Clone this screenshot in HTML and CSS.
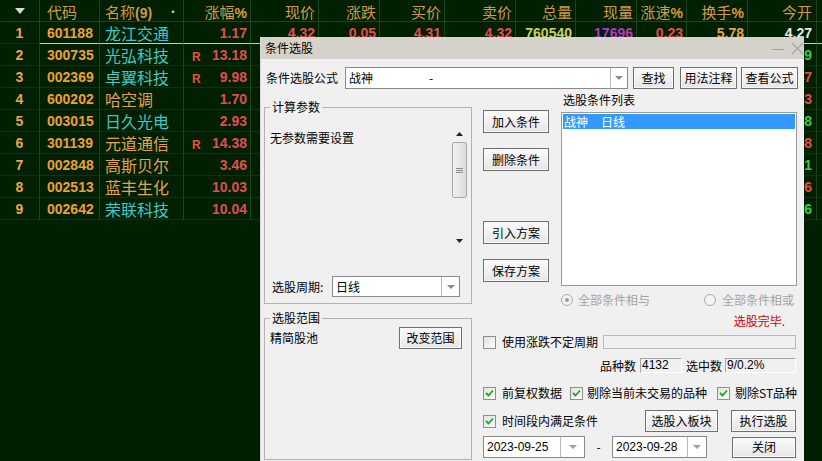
FILE: index.html
```html
<!DOCTYPE html>
<html lang="zh-CN">
<head>
<meta charset="utf-8">
<title>条件选股</title>
<link rel="stylesheet" href="styles.css">
</head>
<body>
<div class="screen">
  <div class="quote">
    <div class="qrow qhead">
      <div class="c c0"><svg width="10" height="6" viewBox="0 0 10 6"><path d="M0 0H10L5 6Z" fill="#d8d8d8"/></svg></div>
      <div class="c c1">代码</div>
      <div class="c c2 name-h"><span>名称<b>(9)</b></span><span class="dot">•</span></div>
      <div class="c">涨幅<b>%</b></div>
      <div class="c">现价</div>
      <div class="c">涨跌</div>
      <div class="c">买价</div>
      <div class="c">卖价</div>
      <div class="c">总量</div>
      <div class="c">现量</div>
      <div class="c">涨速<b>%</b></div>
      <div class="c">换手<b>%</b></div>
      <div class="c last">今开</div>
      <div class="c"></div>
    </div>

    <div class="qrow sel">
      <div class="c c0">1</div><div class="c c1">601188</div><div class="c c2 cyan">龙江交通</div>
      <div class="c c3"><span class="rr"></span><span class="red">1.17</span></div>
      <div class="c red">4.32</div><div class="c red">0.05</div><div class="c red">4.31</div><div class="c red">4.32</div>
      <div class="c ygreen">760540</div><div class="c purple">17696</div><div class="c red">0.23</div><div class="c gold">5.78</div>
      <div class="c last white">4.27</div><div class="c"></div>
    </div>
    <div class="qrow">
      <div class="c c0">2</div><div class="c c1">300735</div><div class="c c2 cyan">光弘科技</div>
      <div class="c c3"><span class="rr">R</span><span class="red">13.18</span></div>
      <div class="c"></div><div class="c"></div><div class="c"></div><div class="c"></div>
      <div class="c"></div><div class="c"></div><div class="c"></div><div class="c"></div>
      <div class="c last green">23.99</div><div class="c"></div>
    </div>
    <div class="qrow">
      <div class="c c0">3</div><div class="c c1">002369</div><div class="c c2 cyan">卓翼科技</div>
      <div class="c c3"><span class="rr">R</span><span class="red">9.98</span></div>
      <div class="c"></div><div class="c"></div><div class="c"></div><div class="c"></div>
      <div class="c"></div><div class="c"></div><div class="c"></div><div class="c"></div>
      <div class="c last red">7.47</div><div class="c"></div>
    </div>
    <div class="qrow">
      <div class="c c0">4</div><div class="c c1">600202</div><div class="c c2 gold">哈空调</div>
      <div class="c c3"><span class="rr"></span><span class="red">1.70</span></div>
      <div class="c"></div><div class="c"></div><div class="c"></div><div class="c"></div>
      <div class="c"></div><div class="c"></div><div class="c"></div><div class="c"></div>
      <div class="c last red">6.53</div><div class="c"></div>
    </div>
    <div class="qrow">
      <div class="c c0">5</div><div class="c c1">003015</div><div class="c c2 cyan">日久光电</div>
      <div class="c c3"><span class="rr"></span><span class="red">2.93</span></div>
      <div class="c"></div><div class="c"></div><div class="c"></div><div class="c"></div>
      <div class="c"></div><div class="c"></div><div class="c"></div><div class="c"></div>
      <div class="c last green">14.98</div><div class="c"></div>
    </div>
    <div class="qrow">
      <div class="c c0">6</div><div class="c c1">301139</div><div class="c c2 gold">元道通信</div>
      <div class="c c3"><span class="rr">R</span><span class="red">14.38</span></div>
      <div class="c"></div><div class="c"></div><div class="c"></div><div class="c"></div>
      <div class="c"></div><div class="c"></div><div class="c"></div><div class="c"></div>
      <div class="c last red">27.58</div><div class="c"></div>
    </div>
    <div class="qrow">
      <div class="c c0">7</div><div class="c c1">002848</div><div class="c c2 gold">高斯贝尔</div>
      <div class="c c3"><span class="rr"></span><span class="red">3.46</span></div>
      <div class="c"></div><div class="c"></div><div class="c"></div><div class="c"></div>
      <div class="c"></div><div class="c"></div><div class="c"></div><div class="c"></div>
      <div class="c last green">11.21</div><div class="c"></div>
    </div>
    <div class="qrow">
      <div class="c c0">8</div><div class="c c1">002513</div><div class="c c2 gold">蓝丰生化</div>
      <div class="c c3"><span class="rr"></span><span class="red">10.03</span></div>
      <div class="c"></div><div class="c"></div><div class="c"></div><div class="c"></div>
      <div class="c"></div><div class="c"></div><div class="c"></div><div class="c"></div>
      <div class="c last red">6.06</div><div class="c"></div>
    </div>
    <div class="qrow">
      <div class="c c0">9</div><div class="c c1">002642</div><div class="c c2 cyan">荣联科技</div>
      <div class="c c3"><span class="rr"></span><span class="red">10.04</span></div>
      <div class="c"></div><div class="c"></div><div class="c"></div><div class="c"></div>
      <div class="c"></div><div class="c"></div><div class="c"></div><div class="c"></div>
      <div class="c last green">5.16</div><div class="c"></div>
    </div>
  </div>

  <div class="dialog">
    <div class="titlebar">
      <span class="ttl">条件选股</span>
      <span class="tb-btns">
        <svg class="tb-min" width="12" height="12" viewBox="0 0 12 12"><path d="M0 6.5H12" stroke="#a4a4a4" stroke-width="1"/></svg>
        <svg class="tb-close" width="13" height="13" viewBox="0 0 13 13"><path d="M1 1L12 12M12 1L1 12" stroke="#a4a4a4" stroke-width="1.2"/></svg>
      </span>
    </div>
    <div class="dbody">
      <div class="formula-row">
        <span class="lbl-formula">条件选股公式</span>
        <div class="combo combo-formula">
          <span class="cv">战神<span class="dash">-</span></span>
          <span class="dd"><svg width="8" height="4" viewBox="0 0 8 4"><path d="M0 0H8L4 4Z" fill="#8a8a8a"/></svg></span>
        </div>
        <button class="btn b-find">查找</button>
        <button class="btn b-usage">用法注释</button>
        <button class="btn b-view">查看公式</button>
      </div>

      <div class="main">
        <div class="leftcol">
          <fieldset class="grp grp-params">
            <legend>计算参数</legend>
            <div class="params">
              <div class="ptext">无参数需要设置</div>
              <div class="vscroll">
                <div class="sb-arrow"><svg width="7" height="4" viewBox="0 0 7 4"><path d="M0 4H7L3.5 0Z" fill="#222"/></svg></div>
                <div class="sb-thumb"><svg width="7" height="5" viewBox="0 0 7 5"><path d="M0 0.5H7M0 2.5H7M0 4.5H7" stroke="#8a8a8a" stroke-width="1"/></svg></div>
                <div class="sb-track"></div>
                <div class="sb-arrow"><svg width="7" height="4" viewBox="0 0 7 4"><path d="M0 0H7L3.5 4Z" fill="#222"/></svg></div>
              </div>
            </div>
            <div class="period">
              <span class="plabel">选股周期:</span>
              <div class="combo combo-period">
                <span class="cv">日线</span>
                <span class="dd"><svg width="8" height="4" viewBox="0 0 8 4"><path d="M0 0H8L4 4Z" fill="#8a8a8a"/></svg></span>
              </div>
            </div>
          </fieldset>
          <fieldset class="grp grp-range">
            <legend>选股范围</legend>
            <div class="range-row">
              <span>精简股池</span>
              <button class="btn b-range">改变范围</button>
            </div>
          </fieldset>
        </div>

        <div class="rightcol">
          <div class="topsec">
            <div class="btncol">
              <button class="btn b-col">加入条件</button>
              <button class="btn b-col b-del">删除条件</button>
              <button class="btn b-col b-imp">引入方案</button>
              <button class="btn b-col b-save">保存方案</button>
            </div>
            <div class="listcol">
              <div class="list-label">选股条件列表</div>
              <div class="listbox">
                <div class="item selected"><span>战神</span><span class="item-p">日线</span></div>
              </div>
              <div class="radios">
                <span class="radio"><span class="rb on"></span>全部条件相与</span>
                <span class="radio"><span class="rb"></span>全部条件相或</span>
              </div>
              <div class="status">选股完毕.</div>
            </div>
          </div>

          <div class="row-unfixed">
            <span class="cb"></span><span class="cbtext">使用涨跌不定周期</span>
            <span class="field field-wide"></span>
          </div>

          <div class="row-count">
            <span>品种数</span><span class="field f-count">4132</span>
            <span class="lbl-sel">选中数</span><span class="field f-sel">9/0.2%</span>
          </div>

          <div class="row-checks">
            <span class="chk chk1"><span class="cb on"><svg width="9" height="8" viewBox="0 0 9 8"><path d="M1 4L3.5 6.5L8 1.5" fill="none" stroke="#23a323" stroke-width="1.8"/></svg></span><span class="cbtext">前复权数据</span></span>
            <span class="chk chk2"><span class="cb on"><svg width="9" height="8" viewBox="0 0 9 8"><path d="M1 4L3.5 6.5L8 1.5" fill="none" stroke="#23a323" stroke-width="1.8"/></svg></span><span class="cbtext">剔除当前未交易的品种</span></span>
            <span class="chk chk3"><span class="cb on"><svg width="9" height="8" viewBox="0 0 9 8"><path d="M1 4L3.5 6.5L8 1.5" fill="none" stroke="#23a323" stroke-width="1.8"/></svg></span><span class="cbtext">剔除ST品种</span></span>
          </div>

          <div class="row-time">
            <span class="chk"><span class="cb on"><svg width="9" height="8" viewBox="0 0 9 8"><path d="M1 4L3.5 6.5L8 1.5" fill="none" stroke="#23a323" stroke-width="1.8"/></svg></span><span class="cbtext">时间段内满足条件</span></span>
            <button class="btn b-block">选股入板块</button>
            <button class="btn b-run">执行选股</button>
          </div>

          <div class="row-date">
            <div class="combo combo-d1">
              <span class="cv num">2023-09-25</span>
              <span class="dd"><svg width="8" height="4" viewBox="0 0 8 4"><path d="M0 0H8L4 4Z" fill="#a0a0a0"/></svg></span>
            </div>
            <span class="dsep">-</span>
            <div class="combo combo-d2">
              <span class="cv num">2023-09-28</span>
              <span class="dd"><svg width="8" height="4" viewBox="0 0 8 4"><path d="M0 0H8L4 4Z" fill="#a0a0a0"/></svg></span>
            </div>
            <button class="btn b-close">关闭</button>
          </div>
        </div>
      </div>
    </div>
  </div>
</div>
</body>
</html>
```

FILE: styles.css
```css
* { box-sizing: border-box; }
html, body { margin: 0; padding: 0; width: 822px; height: 461px; overflow: hidden; }
body { background: #011f01; font-family: "Noto Sans CJK SC", "Noto Sans", sans-serif; }

.screen { position: relative; width: 822px; height: 461px; overflow: hidden; background: #011f01; }

/* ---------- quote table ---------- */
.quote { width: 822px; }
.qrow {
  display: grid;
  grid-template-columns: 40px 60px 84px 67px 68px 61px 65px 71px 60px 61px 50px 61px 69px 5px;
  height: 22px;
}
.c {
  height: 22px;
  border-right: 1px solid #1b461b;
  border-bottom: 1px solid #0d350d;
  padding: 1px 3px 0 2px;
  line-height: 21px;
  white-space: nowrap;
  text-align: right;
  font-family: "Liberation Sans", sans-serif;
  font-weight: bold;
  font-size: 14px;
  color: #d8d8d8;
}
.qhead .c {
  font-family: "Noto Sans CJK SC", sans-serif;
  font-weight: normal;
  font-size: 15px;
  line-height: 20px;
  padding-top: 2px;
  color: #d09a4a;
  border-bottom-color: #1b461b;
}
.qhead .c b { font-family: "Liberation Sans", sans-serif; font-weight: bold; font-size: 14px; color: #e09a2c; }
.qhead .c0 { display: flex; align-items: center; justify-content: center; padding-top: 0; }
.c0 { text-align: center; padding-left: 0; padding-right: 0; color: #e6a848; }
.c1 { text-align: left; padding-left: 7px; color: #f0a030; }
.c2 { text-align: left; padding-left: 5px; font-family: "Noto Sans CJK SC", sans-serif; font-weight: normal; font-size: 16px; line-height: 20px; }
.name-h { display: flex; justify-content: space-between; padding-right: 4px; }
.qhead .name-h b { color: #d09a4a; }
.dot { color: #c8c8c8; font-size: 12px; }
.c3 { display: flex; justify-content: space-between; padding-left: 8px; }
.rr { font-size: 12px; color: #e05838; padding-top: 2px; }
.last { padding-right: 4px; }
.sel .c:not(.c0) { border-bottom-color: #c4dc74; }

.cyan { color: #3cc9c9; }
.gold { color: #e2a446; }
.red { color: #e04e4e; }
.green { color: #3ccc3c; }
.ygreen { color: #c9cf62; }
.purple { color: #b03cc0; }
.white { color: #e8e8e8; }

/* ---------- dialog ---------- */
.dialog {
  position: absolute;
  left: 260px;
  top: 37px;
  width: 544px;
  height: 430px;
  background: #f0f0f0;
  border-left: 1px solid #d9d9d9;
  font-family: "Noto Sans CJK SC", sans-serif;
  font-size: 12px;
  line-height: 14px;
  color: #000;
}
.titlebar {
  height: 22px;
  background: #d5d2cc;
  display: flex;
  align-items: center;
  justify-content: space-between;
  padding-left: 4px;
}
.tb-btns { display: flex; align-items: center; gap: 7px; }
.tb-min { margin-top: 1px; }

.dbody { padding: 8px 0 0 3px; }

.btn {
  font-family: "Noto Sans CJK SC", sans-serif;
  font-size: 12px;
  line-height: 14px;
  color: #000;
  padding: 0;
  margin: 0;
  border: 1px solid #707070;
  background: linear-gradient(#fbfbfb, #e6e6e6);
  box-shadow: inset 0 0 0 1px #f8f8f8;
  height: 23px;
  display: flex;
  align-items: center;
  justify-content: center;
}

.combo {
  display: flex;
  height: 22px;
  border: 1px solid #8a8a8a;
  background: #fff;
}
.combo .cv { flex: 1; padding-left: 3px; display: flex; align-items: center; white-space: nowrap; }
.combo .dd { display: flex; align-items: center; justify-content: center; border-left: 1px solid #b9b9b9; }
.dash { margin-left: 56px; }

.formula-row { display: flex; align-items: center; height: 22px; }
.lbl-formula { width: 81px; padding-left: 2px; }
.combo-formula { width: 283px; }
.combo-formula .dd { width: 17px; }
.b-find { width: 41px; height: 22px; margin-left: 5px; }
.b-usage { width: 57px; height: 22px; margin-left: 6px; }
.b-view { width: 57px; height: 22px; margin-left: 4px; }

.main { display: flex; margin-top: 4px; }
.leftcol { width: 208px; }
.rightcol { width: 315px; margin-left: 11px; }

.grp {
  margin: 0;
  padding: 0;
  border: 1px solid #b2b2b2;
  min-width: 0;
}
.grp legend {
  font-size: 12px;
  line-height: 14px;
  padding: 0 2px;
  margin-left: 5px;
}
.grp-params { margin-top: 7px; padding-bottom: 6px; }
.params { display: flex; padding: 13px 4px 0 5px; }
.ptext { flex: 1; padding-top: 3px; line-height: 16px; }
.vscroll { width: 15px; height: 121px; display: flex; flex-direction: column; }
.sb-arrow { height: 14px; display: flex; align-items: center; justify-content: center; }
.sb-thumb {
  height: 56px;
  margin-top: 1px;
  border: 1px solid #a9a9a9;
  border-radius: 2px;
  background: linear-gradient(90deg, #f2f2f2, #dcdcdc);
  display: flex;
  align-items: center;
  justify-content: center;
}
.sb-track { flex: 1; }
.period { display: flex; align-items: center; margin-top: 28px; padding-left: 7px; height: 21px; }
.plabel { width: 60px; }
.combo-period { width: 128px; height: 21px; }
.combo-period .dd { width: 18px; }

.grp-range { margin-top: 7px; height: 149px; }
.range-row { display: flex; align-items: center; justify-content: space-between; padding: 2px 9px 0 5px; }
.b-range { width: 63px; height: 22px; }

.topsec { display: flex; }
.btncol { width: 66px; margin-right: 12px; padding-top: 17px; display: flex; flex-direction: column; }
.b-col { width: 66px; height: 23px; }
.b-del { margin-top: 15px; }
.b-imp { margin-top: 50px; }
.b-save { margin-top: 15px; }
.listcol { width: 236px; }
.list-label { padding-left: 2px; }
.listbox { margin-top: 5px; height: 174px; border: 1px solid #9a9a9a; background: #fff; padding: 1px; }
.item.selected { background: #3399ff; color: #fff; height: 15px; line-height: 15px; padding-left: 1px; display: flex; }
.item-p { margin-left: 13px; }
.radios { display: flex; justify-content: space-between; margin-top: 7px; padding-right: 3px; color: #a3a3a3; }
.radio { display: flex; align-items: center; }
.rb {
  width: 12px; height: 12px; border-radius: 50%;
  border: 1px solid #a8a8a8; background: #f4f4f4;
  margin-right: 5px;
  display: inline-flex; align-items: center; justify-content: center;
}
.radio + .radio .rb { margin-right: 6px; }
.rb.on::after { content: ""; width: 4px; height: 4px; border-radius: 50%; background: #9a9a9a; }
.status { margin-top: 7px; text-align: right; padding-right: 12px; color: #d40000; }

.cb {
  width: 13px; height: 13px;
  border: 1px solid #8e8e8e;
  background: linear-gradient(135deg, #e2e2e2, #fdfdfd);
  display: inline-flex; align-items: center; justify-content: center;
  flex: none;
}
.cbtext { margin-left: 6px; white-space: nowrap; }
.chk { display: flex; align-items: center; }

.row-unfixed { display: flex; align-items: center; margin-top: 7px; height: 14px; }
.field {
  height: 15px;
  border: 1px solid;
  border-color: #a5a5a5 #ffffff #ffffff #a5a5a5;
  background: #f0f0f0;
  font-family: "Liberation Sans", sans-serif;
  font-size: 12px;
  line-height: 13px;
  padding-left: 1px;
}
.field-wide { flex: 1; margin-left: 5px; margin-right: 2px; height: 14px; border-color: #b9b9b9; }
.row-count { display: flex; align-items: center; justify-content: flex-end; margin-top: 9px; height: 15px; padding-right: 2px; }
.f-count { width: 42px; margin-left: 4px; }
.lbl-sel { margin-left: 4px; }
.f-sel { width: 71px; margin-left: 3px; }

.row-checks { display: flex; align-items: center; margin-top: 13px; height: 14px; }
.chk2 { margin-left: 8px; }
.chk2 .cbtext { margin-left: 4px; }
.chk3 { margin-left: 10px; }
.chk3 .cbtext { margin-left: 5px; }

.row-time { display: flex; align-items: center; margin-top: 10px; height: 22px; }
.b-block { width: 73px; height: 22px; margin-left: auto; }
.b-run { width: 65px; height: 22px; margin-left: 13px; margin-right: 2px; }

.row-date { display: flex; align-items: center; margin-top: 4px; height: 22px; }
.num { font-family: "Liberation Sans", sans-serif; font-size: 12px; }
.combo-d1 { width: 102px; }
.combo-d1 .dd { width: 24px; }
.combo-d2 { width: 95px; }
.combo-d2 .dd { width: 19px; }
.dsep { width: 27px; text-align: center; }
.b-close { width: 64px; height: 21px; margin-left: auto; margin-right: 2px; }
```
